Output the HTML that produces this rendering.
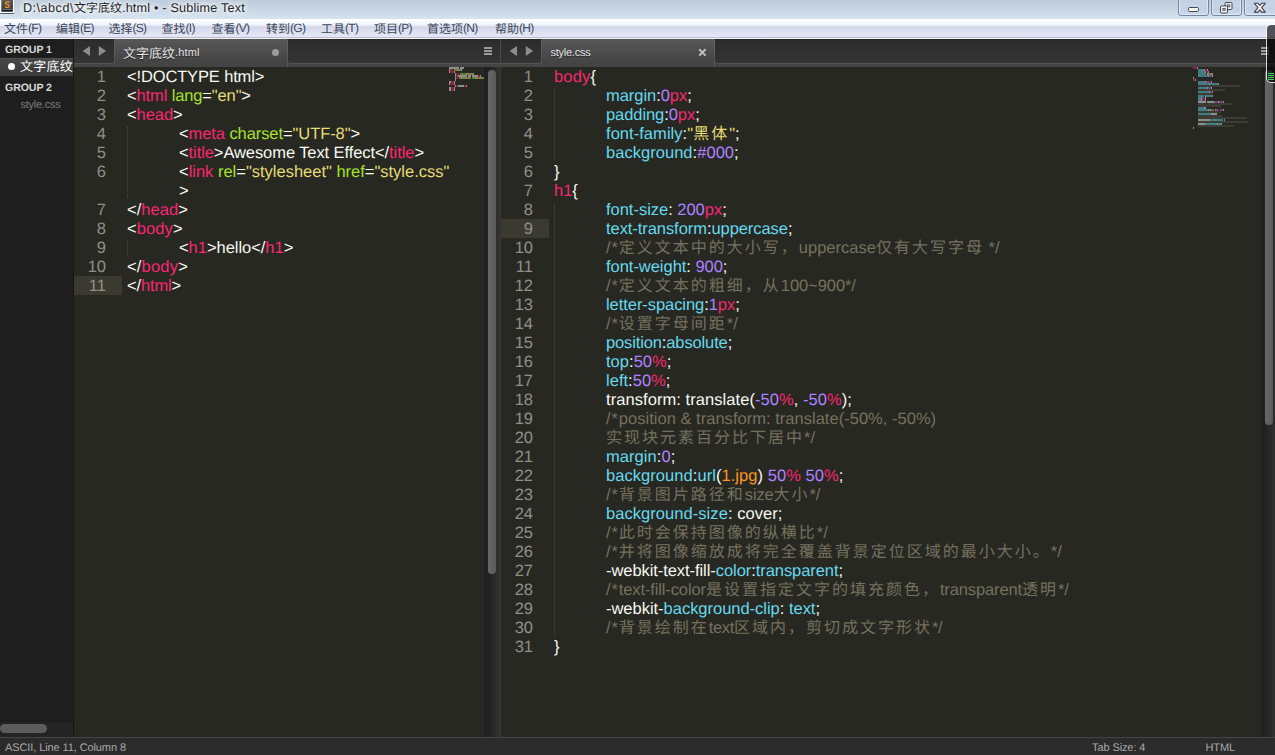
<!DOCTYPE html>
<html lang="en">
<head>
<meta charset="UTF-8">
<title>Sublime Text</title>
<style>
*{box-sizing:border-box;margin:0;padding:0}
html,body{width:1275px;height:755px;overflow:hidden;background:#272822}
body{text-rendering:geometricPrecision;position:relative;font-family:"Liberation Sans",sans-serif;font-size:12px;color:#f8f8f2}
.abs,#app div,#app i,#app svg.a{position:absolute}
span.cj{display:inline-block;vertical-align:top;overflow:visible;font-family:"Liberation Sans","Noto Sans CJK SC",sans-serif;letter-spacing:0;white-space:pre;font-weight:normal}
span.ck{font-size:16px;letter-spacing:2px;line-height:19px;height:19px}
/* title bar */
#title{left:0;top:0;width:1275px;height:19px;background:linear-gradient(#bdccdb 0,#c1cfde 25%,#d6e4f2 100%)}
#title .tx{left:23px;top:1px;height:19px;line-height:15px;padding-top:0;font-size:12.6px;color:#1b1f26;white-space:pre;text-shadow:0 0 5px #fff,0 0 5px #fff,0 0 8px #fff}
.wb{top:-3px;height:19px;border:1px solid #7585a3;border-radius:0 0 3px 3px;background:linear-gradient(#c0cfe1,#c5d4e6 50%,#bfd0e4 51%,#cad8ea);box-shadow:inset 0 0 0 1px rgba(255,255,255,.45)}
/* menu bar */
#menu{left:0;top:19px;width:1275px;height:20px;background:linear-gradient(#fff 0,#fdfdff 10%,#e9edf7 35%,#d4d7eb 35.1%,#e3e7f6 88%,#b9bdce 88.1%,#b9bdce 94%,#f2f2f2 94.1%)}
.ml{font-size:12px;letter-spacing:-.7px;position:relative;top:-1px}
.mi{top:3px;height:15px;line-height:15px;font-size:12px;color:#3a4759;white-space:pre}
/* sidebar */
#side{left:0;top:39px;width:74px;height:698px;background:#1e1e1e;border-right:1px solid #161616}
.grp{left:5px;font-weight:bold;font-size:10.6px;color:#d9d9d9;white-space:pre;height:14px;line-height:14px;letter-spacing:-.1px}
#sel{left:0;top:19px;width:73px;height:18px;background:linear-gradient(#474747,#3a3a3a);border-top:1px solid #505050}
/* tab bars */
.tb{top:39px;height:28px;background:#444;border-top:0}
.tb .inset{top:0;height:24px;background:linear-gradient(#262626 0,#2d2d2d 8%,#303030 50%,#343434);box-shadow:0 1px 0 #545454}
.tb .tab{top:0;height:28px;background:linear-gradient(#575757,#444 85%);border-radius:3px 3px 0 0;box-shadow:inset 1px 0 0 rgba(255,255,255,.08),inset -1px 0 0 rgba(255,255,255,.1)}
.tb .tl{top:7px;height:15px;line-height:15px;font-size:12px;color:#e6e6e6;white-space:pre;text-shadow:0 1px 1px #222}
.ham i{left:0;width:8px;height:2px;background:#9c9c9c}
/* editor */
.ln{height:19px;line-height:19px;font-size:16.5px;color:#8f908a;text-align:right;white-space:pre}
.cl{height:19px;line-height:19px;font-size:16.5px;white-space:pre}
.cs{letter-spacing:.9px}
.hl{height:19px;background:#3b3a30}
.ig{width:1px;background:repeating-linear-gradient(#4a4b42 0,#4a4b42 1px,transparent 1px,transparent 2px)}
.w{color:#f8f8f2}.p{color:#f92672}.g{color:#a6e22e}.y{color:#e6db74}.b{color:#66d9ef}.u{color:#ae81ff}.c{color:#75715e}.o{color:#fd971f}
.mm i{height:1.6px;opacity:.62}
.sbt{background:#232323}
.sbh{background:linear-gradient(90deg,#686868,#5a5a5a);border-radius:4px}
/* status */
#status{left:0;top:737px;width:1275px;height:18px;background:#2b2b2b;border-top:1px solid #454545}
#status div{top:4px;height:13px;line-height:13px;font-size:11px;letter-spacing:-.1px;color:#a9a9a9;white-space:pre}
</style>
</head>
<body>
<div id="app">

<!-- ======== title bar ======== -->
<div id="title">
  <svg class="a" style="left:0;top:0" width="16" height="16" viewBox="0 0 16 16">
    <defs><linearGradient id="icg" x1="0" y1="0" x2="0" y2="1"><stop offset="0" stop-color="#636363"/><stop offset="1" stop-color="#3a3a3a"/></linearGradient></defs>
    <rect x="0.2" y="12.8" width="14" height="1.3" rx=".6" fill="#3a4150" opacity=".8"/>
    <rect x="-1" y="-3" width="15" height="16" rx="1" fill="#fff"/>
    <rect x="1.3" y="-3" width="11.7" height="14.6" rx="1" fill="url(#icg)"/>
    <rect x="1.3" y="9.2" width="11.7" height=".7" fill="#808080"/>
    <rect x="1.3" y="9.9" width="11.7" height="1.7" rx=".6" fill="#141414"/>
    <text transform="translate(7.15 8.05) scale(.8 1)" text-anchor="middle" font-family="Liberation Sans" font-weight="bold" font-size="9.8" fill="#f8951d">S</text>
  </svg>
  <div class="tx"><span style="letter-spacing:.5px">D:\abcd\</span><span class="cj" style="width:48px;height:15px;line-height:15px;font-size:12px">文字底纹</span><span style="letter-spacing:.22px">.html • - Sublime Text</span></div>
  <div class="wb" style="left:1178px;width:31px"></div>
  <div class="wb" style="left:1211px;width:31px"></div>
  <div class="wb" style="left:1244px;width:34px"></div>
  <svg class="a" style="left:1178px;top:0" width="97" height="16" viewBox="0 0 97 16">
    <rect x="10.5" y="7.5" width="10" height="4" rx="1.2" fill="#f4f4f4" stroke="#46464f" stroke-width="1"/>
    <g fill="#f4f4f4" stroke="#46464f" stroke-width="1">
      <rect x="47" y="2.5" width="7" height="7" rx="1"/>
      <rect x="49.2" y="4.8" width="2.6" height="2" fill="#c9d6e6" stroke-width=".8"/>
      <rect x="42.5" y="6" width="7" height="7" rx="1"/>
      <rect x="44.8" y="8.4" width="2.4" height="2.2" fill="#c9d6e6" stroke-width=".8"/>
    </g>
    <path d="M76.3 3.3h3.7l1.8 2.2 1.8-2.2h3.7l-3.7 4.4 3.7 4.4h-3.7l-1.8-2.2-1.8 2.2h-3.7l3.7-4.4z" fill="#f5f5f5" stroke="#41414a" stroke-width="1.1" stroke-linejoin="round"/>
  </svg>
</div>

<!-- ======== menu bar ======== -->
<div id="menu"><div class="mi" style="left:4px"><span class="cj" style="width:24px;height:15px;line-height:15px;font-size:12px">文件</span><span class="ml">(F)</span></div><div class="mi" style="left:56px"><span class="cj" style="width:24px;height:15px;line-height:15px;font-size:12px">编辑</span><span class="ml">(E)</span></div><div class="mi" style="left:108.5px"><span class="cj" style="width:24px;height:15px;line-height:15px;font-size:12px">选择</span><span class="ml">(S)</span></div><div class="mi" style="left:161.5px"><span class="cj" style="width:24px;height:15px;line-height:15px;font-size:12px">查找</span><span class="ml">(I)</span></div><div class="mi" style="left:211.5px"><span class="cj" style="width:24px;height:15px;line-height:15px;font-size:12px">查看</span><span class="ml">(V)</span></div><div class="mi" style="left:266px"><span class="cj" style="width:24px;height:15px;line-height:15px;font-size:12px">转到</span><span class="ml">(G)</span></div><div class="mi" style="left:321px"><span class="cj" style="width:24px;height:15px;line-height:15px;font-size:12px">工具</span><span class="ml">(T)</span></div><div class="mi" style="left:374px"><span class="cj" style="width:24px;height:15px;line-height:15px;font-size:12px">项目</span><span class="ml">(P)</span></div><div class="mi" style="left:427px"><span class="cj" style="width:36px;height:15px;line-height:15px;font-size:12px">首选项</span><span class="ml">(N)</span></div><div class="mi" style="left:495px"><span class="cj" style="width:24px;height:15px;line-height:15px;font-size:12px">帮助</span><span class="ml">(H)</span></div></div>

<!-- ======== sidebar ======== -->
<div id="side">
  <div class="grp" style="top:4px">GROUP 1</div>
  <div id="sel"></div>
  <div style="left:8px;top:24px;width:7px;height:7px;border-radius:50%;background:#fff"></div>
  <div style="left:20px;top:20px;height:16px;line-height:16px;width:53px;overflow:hidden;color:#fff;white-space:pre"><span class="cj" style="width:53px;height:16px;line-height:16px;font-size:13px;letter-spacing:.25px">文字底纹</span></div>
  <div class="grp" style="top:42px">GROUP 2</div>
  <div style="left:20.5px;top:59px;height:14px;line-height:14px;font-size:11px;color:#7c7c7c;letter-spacing:-.25px;white-space:pre">style.css</div>
  <div style="left:0;top:683px;width:73px;height:15px;background:#242424"></div>
  <div style="left:0;top:685px;width:47px;height:8.5px;border-radius:4.5px;background:#5c5c5c"></div>
</div>

<!-- ======== left pane ======== -->
<div class="tb" style="left:74px;width:426px">
  <div class="inset" style="left:0;width:40px;border-radius:0 0 3px 0"></div>
  <div class="tab" style="left:40px;width:174px"></div>
  <div class="inset" style="left:214px;width:212px;border-radius:0 0 0 3px"></div>
  <svg class="a" style="left:8px;top:6px" width="26" height="12" viewBox="0 0 26 12"><path d="M.6 6l7.4-4.9v9.8zM24.2 6l-7.4-4.9v9.8z" fill="#8c8c8c"/></svg>
  <div class="tl" style="left:49px"><span class="cj" style="width:52px;height:15px;line-height:15px;font-size:13px">文字底纹</span><span style="font-size:11px;letter-spacing:.15px;position:relative;top:-1px">.html</span></div>
  <div style="left:198px;top:9.5px;width:7px;height:7px;border-radius:50%;background:#9b9b9b"></div>
  <div class="ham" style="left:410px;top:8px;width:8px;height:8px"><i style="top:0"></i><i style="top:3px"></i><i style="top:6px"></i></div>
</div>
<div class="sbt" style="left:484px;top:67px;width:17px;height:670px;background:linear-gradient(90deg,#1e1e1e,#232323 35%,#353535)"></div>
<div class="sbh" style="left:488px;top:70px;width:8px;height:504px"></div>
<div style="left:500px;top:39px;width:1px;height:28px;background:#4b4b4b"></div>

<!-- ======== right pane ======== -->
<div class="tb" style="left:501px;width:774px">
  <div class="inset" style="left:0;width:40px;border-radius:0 0 3px 0"></div>
  <div class="tab" style="left:40px;width:174px"></div>
  <div class="inset" style="left:214px;width:560px;border-radius:0 0 0 3px"></div>
  <svg class="a" style="left:8px;top:6px" width="26" height="12" viewBox="0 0 26 12"><path d="M.6 6l7.4-4.9v9.8zM24.2 6l-7.4-4.9v9.8z" fill="#8c8c8c"/></svg>
  <div class="tl" style="left:49.5px;font-size:11px;letter-spacing:-.25px">style.css</div>
  <svg class="a" style="left:197px;top:9px" width="9" height="9" viewBox="0 0 9 9"><path d="M1.2 1.2l6.4 6.4M7.6 1.2l-6.4 6.4" stroke="#c0c0c0" stroke-width="2"/></svg>
  <div class="ham" style="left:760px;top:8px;width:8px;height:8px"><i style="top:0"></i><i style="top:3px"></i><i style="top:6px"></i></div>
</div>
<div class="sbt" style="left:1261px;top:67px;width:14px;height:670px;background:linear-gradient(90deg,#1e1e1e,#232323 35%,#303030)"></div>
<div class="sbh" style="left:1265px;top:70px;width:8.3px;height:355px"></div>

<!-- ======== editor contents ======== -->
<div class="ig" style="left:127px;top:127px;height:72px"></div><div class="ig" style="left:127px;top:241px;height:15px"></div><div class="ig" style="left:554px;top:89px;height:72px"></div><div class="ig" style="left:554px;top:203px;height:433px"></div>
<div class="ln" style="left:66px;top:68px;width:40px">1</div>
<div class="cl" id="L0" style="left:127.0px;top:68px;letter-spacing:-0.142px"><span class="w">&lt;!DOCTYPE html&gt;</span></div>
<div class="ln" style="left:66px;top:87px;width:40px">2</div>
<div class="cl" id="L1" style="left:127.0px;top:87px;letter-spacing:-0.132px"><span class="w">&lt;</span><span class="p">html</span><span class="w"> </span><span class="g">lang</span><span class="w">=</span><span class="y">"en"</span><span class="w">&gt;</span></div>
<div class="ln" style="left:66px;top:106px;width:40px">3</div>
<div class="cl" id="L2" style="left:127.0px;top:106px;letter-spacing:-0.058px"><span class="w">&lt;</span><span class="p">head</span><span class="w">&gt;</span></div>
<div class="ln" style="left:66px;top:125px;width:40px">4</div>
<div class="cl" id="L3" style="left:179.0px;top:125px;letter-spacing:-0.083px"><span class="w">&lt;</span><span class="p">meta</span><span class="w"> </span><span class="g">charset</span><span class="w">=</span><span class="y">"UTF-8"</span><span class="w">&gt;</span></div>
<div class="ln" style="left:66px;top:144px;width:40px">5</div>
<div class="cl" id="L4" style="left:179.0px;top:144px;letter-spacing:-0.081px"><span class="w">&lt;</span><span class="p">title</span><span class="w">&gt;Awesome Text Effect&lt;/</span><span class="p">title</span><span class="w">&gt;</span></div>
<div class="ln" style="left:66px;top:163px;width:40px">6</div>
<div class="cl" id="L5" style="left:179.0px;top:163px;letter-spacing:-0.009px"><span class="w">&lt;</span><span class="p">link</span><span class="w"> </span><span class="g">rel</span><span class="w">=</span><span class="y">"stylesheet"</span><span class="w"> </span><span class="g">href</span><span class="w">=</span><span class="y">"style.css"</span></div>
<div class="cl" id="L6" style="left:179.0px;top:182px;letter-spacing:0.000px"><span class="w">&gt;</span></div>
<div class="ln" style="left:66px;top:201px;width:40px">7</div>
<div class="cl" id="L7" style="left:127.0px;top:201px;letter-spacing:0.051px"><span class="w">&lt;/</span><span class="p">head</span><span class="w">&gt;</span></div>
<div class="ln" style="left:66px;top:220px;width:40px">8</div>
<div class="cl" id="L8" style="left:127.0px;top:220px;letter-spacing:0.098px"><span class="w">&lt;</span><span class="p">body</span><span class="w">&gt;</span></div>
<div class="ln" style="left:66px;top:239px;width:40px">9</div>
<div class="cl" id="L9" style="left:179.0px;top:239px;letter-spacing:-0.033px"><span class="w">&lt;</span><span class="p">h1</span><span class="w">&gt;hello&lt;/</span><span class="p">h1</span><span class="w">&gt;</span></div>
<div class="ln" style="left:66px;top:258px;width:40px">10</div>
<div class="cl" id="L10" style="left:127.0px;top:258px;letter-spacing:0.185px"><span class="w">&lt;/</span><span class="p">body</span><span class="w">&gt;</span></div>
<div class="hl" style="left:74px;top:276px;width:48px"></div>
<div class="ln" style="left:66px;top:277px;width:40px">11</div>
<div class="cl" id="L11" style="left:127.0px;top:277px;letter-spacing:-0.142px"><span class="w">&lt;/</span><span class="p">html</span><span class="w">&gt;</span></div>
<div class="ln" style="left:493px;top:68px;width:40px">1</div>
<div class="cl" id="R0" style="left:554.0px;top:68px;letter-spacing:0.161px"><span class="p">body</span><span class="w">{</span></div>
<div class="ln" style="left:493px;top:87px;width:40px">2</div>
<div class="cl" id="R1" style="left:606.0px;top:87px;letter-spacing:-0.050px"><span class="b">margin</span><span class="w">:</span><span class="u">0</span><span class="p">px</span><span class="w">;</span></div>
<div class="ln" style="left:493px;top:106px;width:40px">3</div>
<div class="cl" id="R2" style="left:606.0px;top:106px;letter-spacing:-0.071px"><span class="b">padding</span><span class="w">:</span><span class="u">0</span><span class="p">px</span><span class="w">;</span></div>
<div class="ln" style="left:493px;top:125px;width:40px">4</div>
<div class="cl" id="R3" style="left:606.0px;top:125px;letter-spacing:0.045px"><span class="b">font-family</span><span class="w">:</span><span class="y">"<span class="cj ck" style="width:36px">黑体</span>"</span><span class="w">;</span></div>
<div class="ln" style="left:493px;top:144px;width:40px">5</div>
<div class="cl" id="R4" style="left:606.0px;top:144px;letter-spacing:0.035px"><span class="b">background</span><span class="w">:</span><span class="u">#000</span><span class="w">;</span></div>
<div class="ln" style="left:493px;top:163px;width:40px">6</div>
<div class="cl" id="R5" style="left:554.0px;top:163px;letter-spacing:0.000px"><span class="w">}</span></div>
<div class="ln" style="left:493px;top:182px;width:40px">7</div>
<div class="cl" id="R6" style="left:554.0px;top:182px;letter-spacing:0.000px"><span class="p">h1</span><span class="w">{</span></div>
<div class="ln" style="left:493px;top:201px;width:40px">8</div>
<div class="cl" id="R7" style="left:606.0px;top:201px;letter-spacing:-0.023px"><span class="b">font-size</span><span class="w">: </span><span class="u">200</span><span class="p">px</span><span class="w">;</span></div>
<div class="hl" style="left:501px;top:219px;width:48px"></div>
<div class="ln" style="left:493px;top:220px;width:40px">9</div>
<div class="cl" id="R8" style="left:606.0px;top:220px;letter-spacing:-0.065px"><span class="b">text-transform</span><span class="w">:</span><span class="b">uppercase</span><span class="w">;</span></div>
<div class="ln" style="left:493px;top:239px;width:40px">10</div>
<div class="cl" id="R9" style="left:606.0px;top:239px;letter-spacing:0.009px"><span class="c"><span class="cs">/*</span><span class="cj ck" style="width:180px">定义文本中的大小写，</span>uppercase<span class="cj ck" style="width:108px">仅有大写字母</span> */</span></div>
<div class="ln" style="left:493px;top:258px;width:40px">11</div>
<div class="cl" id="R10" style="left:606.0px;top:258px;letter-spacing:-0.036px"><span class="b">font-weight</span><span class="w">: </span><span class="u">900</span><span class="w">;</span></div>
<div class="ln" style="left:493px;top:277px;width:40px">12</div>
<div class="cl" id="R11" style="left:606.0px;top:277px;letter-spacing:-0.074px"><span class="c"><span class="cs">/*</span><span class="cj ck" style="width:162px">定义文本的粗细，从</span>100~900*/</span></div>
<div class="ln" style="left:493px;top:296px;width:40px">13</div>
<div class="cl" id="R12" style="left:606.0px;top:296px;letter-spacing:-0.062px"><span class="b">letter-spacing</span><span class="w">:</span><span class="u">1</span><span class="p">px</span><span class="w">;</span></div>
<div class="ln" style="left:493px;top:315px;width:40px">14</div>
<div class="cl" id="R13" style="left:606.0px;top:315px;letter-spacing:0.000px"><span class="c"><span class="cs">/*</span><span class="cj ck" style="width:108px">设置字母间距</span>*/</span></div>
<div class="ln" style="left:493px;top:334px;width:40px">15</div>
<div class="cl" id="R14" style="left:606.0px;top:334px;letter-spacing:-0.131px"><span class="b">position</span><span class="w">:</span><span class="b">absolute</span><span class="w">;</span></div>
<div class="ln" style="left:493px;top:353px;width:40px">16</div>
<div class="cl" id="R15" style="left:606.0px;top:353px;letter-spacing:0.030px"><span class="b">top</span><span class="w">:</span><span class="u">50</span><span class="p">%</span><span class="w">;</span></div>
<div class="ln" style="left:493px;top:372px;width:40px">17</div>
<div class="cl" id="R16" style="left:606.0px;top:372px;letter-spacing:0.018px"><span class="b">left</span><span class="w">:</span><span class="u">50</span><span class="p">%</span><span class="w">;</span></div>
<div class="ln" style="left:493px;top:391px;width:40px">18</div>
<div class="cl" id="R17" style="left:606.0px;top:391px;letter-spacing:0.062px"><span class="w">transform: translate(</span><span class="u">-50</span><span class="p">%</span><span class="w">, </span><span class="u">-50</span><span class="p">%</span><span class="w">);</span></div>
<div class="ln" style="left:493px;top:410px;width:40px">19</div>
<div class="cl" id="R18" style="left:606.0px;top:410px;letter-spacing:0.022px"><span class="c"><span class="cs">/*</span>position &amp; transform: translate(-50%, -50%)</span></div>
<div class="ln" style="left:493px;top:429px;width:40px">20</div>
<div class="cl" id="R19" style="left:606.0px;top:429px;letter-spacing:0.000px"><span class="c"><span class="cj ck" style="width:198px">实现块元素百分比下居中</span>*/</span></div>
<div class="ln" style="left:493px;top:448px;width:40px">21</div>
<div class="cl" id="R20" style="left:606.0px;top:448px;letter-spacing:0.065px"><span class="b">margin</span><span class="w">:</span><span class="u">0</span><span class="w">;</span></div>
<div class="ln" style="left:493px;top:467px;width:40px">22</div>
<div class="cl" id="R21" style="left:606.0px;top:467px;letter-spacing:0.053px"><span class="b">background</span><span class="w">:</span><span class="b">url</span><span class="w">(</span><span class="o">1.jpg</span><span class="w">) </span><span class="u">50</span><span class="p">%</span><span class="w"> </span><span class="u">50</span><span class="p">%</span><span class="w">;</span></div>
<div class="ln" style="left:493px;top:486px;width:40px">23</div>
<div class="cl" id="R22" style="left:606.0px;top:486px;letter-spacing:-0.146px"><span class="c"><span class="cs">/*</span><span class="cj ck" style="width:126px">背景图片路径和</span>size<span class="cj ck" style="width:36px">大小</span>*/</span></div>
<div class="ln" style="left:493px;top:505px;width:40px">24</div>
<div class="cl" id="R23" style="left:606.0px;top:505px;letter-spacing:0.053px"><span class="b">background-size</span><span class="w">: cover;</span></div>
<div class="ln" style="left:493px;top:524px;width:40px">25</div>
<div class="cl" id="R24" style="left:606.0px;top:524px;letter-spacing:0.000px"><span class="c"><span class="cs">/*</span><span class="cj ck" style="width:198px">此时会保持图像的纵横比</span>*/</span></div>
<div class="ln" style="left:493px;top:543px;width:40px">26</div>
<div class="cl" id="R25" style="left:606.0px;top:543px;letter-spacing:0.000px"><span class="c"><span class="cs">/*</span><span class="cj ck" style="width:432px">并将图像缩放成将完全覆盖背景定位区域的最小大小。</span>*/</span></div>
<div class="ln" style="left:493px;top:562px;width:40px">27</div>
<div class="cl" id="R26" style="left:606.0px;top:562px;letter-spacing:-0.066px"><span class="w">-webkit-text-fill-</span><span class="b">color</span><span class="w">:</span><span class="b">transparent</span><span class="w">;</span></div>
<div class="ln" style="left:493px;top:581px;width:40px">28</div>
<div class="cl" id="R27" style="left:606.0px;top:581px;letter-spacing:-0.124px"><span class="c"><span class="cs">/*</span>text-fill-color<span class="cj ck" style="width:234px">是设置指定文字的填充颜色，</span>transparent<span class="cj ck" style="width:36px">透明</span>*/</span></div>
<div class="ln" style="left:493px;top:600px;width:40px">29</div>
<div class="cl" id="R28" style="left:606.0px;top:600px;letter-spacing:-0.021px"><span class="w">-webkit-</span><span class="b">background-clip</span><span class="w">: </span><span class="b">text</span><span class="w">;</span></div>
<div class="ln" style="left:493px;top:619px;width:40px">30</div>
<div class="cl" id="R29" style="left:606.0px;top:619px;letter-spacing:-0.350px"><span class="c"><span class="cs">/*</span><span class="cj ck" style="width:90px">背景绘制在</span>text<span class="cj ck" style="width:198px">区域内，剪切成文字形状</span>*/</span></div>
<div class="ln" style="left:493px;top:638px;width:40px">31</div>
<div class="cl" id="R30" style="left:554.0px;top:638px;letter-spacing:0.000px"><span class="w">}</span></div>
<div class="mm"><i style="left:449.0px;top:67px;width:10.1px;background:#cfcfc8"></i><i style="left:459.5px;top:67px;width:4.4px;background:#cfcfc8"></i><i style="left:449.0px;top:69px;width:1.0px;background:#cfcfc8"></i><i style="left:450.0px;top:69px;width:3.3px;background:#c81f5c"></i><i style="left:453.9px;top:69px;width:3.3px;background:#86b626"></i><i style="left:457.2px;top:69px;width:1.0px;background:#cfcfc8"></i><i style="left:458.2px;top:69px;width:3.2px;background:#b8af5d"></i><i style="left:461.4px;top:69px;width:1.0px;background:#cfcfc8"></i><i style="left:449.0px;top:71px;width:1.0px;background:#cfcfc8"></i><i style="left:450.0px;top:71px;width:3.9px;background:#c81f5c"></i><i style="left:454.0px;top:71px;width:1.0px;background:#cfcfc8"></i><i style="left:454.6px;top:73px;width:1.0px;background:#cfcfc8"></i><i style="left:455.6px;top:73px;width:3.9px;background:#c81f5c"></i><i style="left:460.0px;top:73px;width:5.8px;background:#86b626"></i><i style="left:465.8px;top:73px;width:1.0px;background:#cfcfc8"></i><i style="left:466.9px;top:73px;width:6.3px;background:#b8af5d"></i><i style="left:473.1px;top:73px;width:1.0px;background:#cfcfc8"></i><i style="left:454.6px;top:75px;width:1.0px;background:#cfcfc8"></i><i style="left:455.6px;top:75px;width:2.7px;background:#c81f5c"></i><i style="left:458.4px;top:75px;width:8.8px;background:#cfcfc8"></i><i style="left:467.7px;top:75px;width:3.4px;background:#cfcfc8"></i><i style="left:471.6px;top:75px;width:6.0px;background:#cfcfc8"></i><i style="left:477.6px;top:75px;width:2.7px;background:#c81f5c"></i><i style="left:480.4px;top:75px;width:1.0px;background:#cfcfc8"></i><i style="left:454.6px;top:77px;width:1.0px;background:#cfcfc8"></i><i style="left:455.6px;top:77px;width:2.6px;background:#c81f5c"></i><i style="left:458.8px;top:77px;width:2.0px;background:#86b626"></i><i style="left:460.7px;top:77px;width:1.0px;background:#cfcfc8"></i><i style="left:461.8px;top:77px;width:9.2px;background:#b8af5d"></i><i style="left:471.5px;top:77px;width:3.0px;background:#86b626"></i><i style="left:474.5px;top:77px;width:1.0px;background:#cfcfc8"></i><i style="left:475.5px;top:77px;width:8.0px;background:#b8af5d"></i><i style="left:454.6px;top:79px;width:1.0px;background:#cfcfc8"></i><i style="left:449.0px;top:81px;width:1.5px;background:#cfcfc8"></i><i style="left:450.5px;top:81px;width:3.9px;background:#c81f5c"></i><i style="left:454.4px;top:81px;width:1.0px;background:#cfcfc8"></i><i style="left:449.0px;top:83px;width:1.0px;background:#cfcfc8"></i><i style="left:450.0px;top:83px;width:3.8px;background:#c81f5c"></i><i style="left:453.9px;top:83px;width:1.0px;background:#cfcfc8"></i><i style="left:454.6px;top:85px;width:1.0px;background:#cfcfc8"></i><i style="left:455.6px;top:85px;width:2.0px;background:#c81f5c"></i><i style="left:457.6px;top:85px;width:6.3px;background:#cfcfc8"></i><i style="left:463.9px;top:85px;width:2.0px;background:#c81f5c"></i><i style="left:465.8px;top:85px;width:1.0px;background:#cfcfc8"></i><i style="left:449.0px;top:87px;width:1.5px;background:#cfcfc8"></i><i style="left:450.5px;top:87px;width:3.8px;background:#c81f5c"></i><i style="left:454.3px;top:87px;width:1.0px;background:#cfcfc8"></i><i style="left:449.0px;top:89px;width:1.5px;background:#cfcfc8"></i><i style="left:450.5px;top:89px;width:3.3px;background:#c81f5c"></i><i style="left:453.9px;top:89px;width:1.0px;background:#cfcfc8"></i><i style="left:1192.8px;top:67px;width:3.8px;background:#c81f5c"></i><i style="left:1196.6px;top:67px;width:0.8px;background:#cfcfc8"></i><i style="left:1198.4px;top:69px;width:5.4px;background:#52aebf"></i><i style="left:1203.8px;top:69px;width:0.8px;background:#cfcfc8"></i><i style="left:1204.3px;top:69px;width:1.0px;background:#8b67cc"></i><i style="left:1205.3px;top:69px;width:1.9px;background:#c81f5c"></i><i style="left:1207.1px;top:69px;width:0.8px;background:#cfcfc8"></i><i style="left:1198.4px;top:71px;width:6.3px;background:#52aebf"></i><i style="left:1204.7px;top:71px;width:0.8px;background:#cfcfc8"></i><i style="left:1205.2px;top:71px;width:1.0px;background:#8b67cc"></i><i style="left:1206.2px;top:71px;width:1.9px;background:#c81f5c"></i><i style="left:1208.0px;top:71px;width:0.8px;background:#cfcfc8"></i><i style="left:1198.4px;top:73px;width:8.1px;background:#52aebf"></i><i style="left:1206.5px;top:73px;width:0.8px;background:#cfcfc8"></i><i style="left:1207.0px;top:73px;width:5.1px;background:#b8af5d"></i><i style="left:1212.1px;top:73px;width:0.8px;background:#cfcfc8"></i><i style="left:1198.4px;top:75px;width:9.2px;background:#52aebf"></i><i style="left:1207.6px;top:75px;width:0.8px;background:#cfcfc8"></i><i style="left:1208.1px;top:75px;width:3.9px;background:#8b67cc"></i><i style="left:1212.0px;top:75px;width:0.8px;background:#cfcfc8"></i><i style="left:1192.8px;top:77px;width:0.8px;background:#cfcfc8"></i><i style="left:1192.8px;top:79px;width:2.0px;background:#c81f5c"></i><i style="left:1194.8px;top:79px;width:0.8px;background:#cfcfc8"></i><i style="left:1198.4px;top:81px;width:6.7px;background:#52aebf"></i><i style="left:1205.1px;top:81px;width:0.8px;background:#cfcfc8"></i><i style="left:1206.1px;top:81px;width:2.9px;background:#8b67cc"></i><i style="left:1209.0px;top:81px;width:1.9px;background:#c81f5c"></i><i style="left:1210.9px;top:81px;width:0.8px;background:#cfcfc8"></i><i style="left:1198.4px;top:83px;width:10.9px;background:#52aebf"></i><i style="left:1209.3px;top:83px;width:0.8px;background:#cfcfc8"></i><i style="left:1209.8px;top:83px;width:8.2px;background:#52aebf"></i><i style="left:1218.0px;top:83px;width:0.8px;background:#cfcfc8"></i><i style="left:1198.4px;top:85px;width:40.2px;background:#4d4a40"></i><i style="left:1239.1px;top:85px;width:1.2px;background:#4d4a40"></i><i style="left:1198.4px;top:87px;width:8.6px;background:#52aebf"></i><i style="left:1207.0px;top:87px;width:0.8px;background:#cfcfc8"></i><i style="left:1208.0px;top:87px;width:2.9px;background:#8b67cc"></i><i style="left:1211.0px;top:87px;width:0.8px;background:#cfcfc8"></i><i style="left:1198.4px;top:89px;width:26.6px;background:#4d4a40"></i><i style="left:1198.4px;top:91px;width:10.6px;background:#52aebf"></i><i style="left:1209.0px;top:91px;width:0.8px;background:#cfcfc8"></i><i style="left:1209.5px;top:91px;width:1.0px;background:#8b67cc"></i><i style="left:1210.5px;top:91px;width:1.9px;background:#c81f5c"></i><i style="left:1212.3px;top:91px;width:0.8px;background:#cfcfc8"></i><i style="left:1198.4px;top:93px;width:13.9px;background:#4d4a40"></i><i style="left:1198.4px;top:95px;width:6.1px;background:#52aebf"></i><i style="left:1204.5px;top:95px;width:0.8px;background:#cfcfc8"></i><i style="left:1205.0px;top:95px;width:6.7px;background:#52aebf"></i><i style="left:1211.7px;top:95px;width:0.8px;background:#cfcfc8"></i><i style="left:1198.4px;top:97px;width:2.5px;background:#52aebf"></i><i style="left:1200.9px;top:97px;width:0.8px;background:#cfcfc8"></i><i style="left:1201.3px;top:97px;width:2.0px;background:#8b67cc"></i><i style="left:1203.3px;top:97px;width:1.6px;background:#c81f5c"></i><i style="left:1204.9px;top:97px;width:0.8px;background:#cfcfc8"></i><i style="left:1198.4px;top:99px;width:2.4px;background:#52aebf"></i><i style="left:1200.8px;top:99px;width:0.8px;background:#cfcfc8"></i><i style="left:1201.2px;top:99px;width:2.0px;background:#8b67cc"></i><i style="left:1203.2px;top:99px;width:1.6px;background:#c81f5c"></i><i style="left:1204.8px;top:99px;width:0.8px;background:#cfcfc8"></i><i style="left:1198.4px;top:101px;width:7.9px;background:#cfcfc8"></i><i style="left:1206.8px;top:101px;width:7.4px;background:#cfcfc8"></i><i style="left:1214.2px;top:101px;width:2.6px;background:#8b67cc"></i><i style="left:1216.7px;top:101px;width:1.6px;background:#c81f5c"></i><i style="left:1218.3px;top:101px;width:0.8px;background:#cfcfc8"></i><i style="left:1219.3px;top:101px;width:2.6px;background:#8b67cc"></i><i style="left:1221.9px;top:101px;width:1.6px;background:#c81f5c"></i><i style="left:1223.4px;top:101px;width:1.1px;background:#cfcfc8"></i><i style="left:1198.4px;top:103px;width:7.3px;background:#4d4a40"></i><i style="left:1206.2px;top:103px;width:1.2px;background:#4d4a40"></i><i style="left:1207.8px;top:103px;width:7.9px;background:#4d4a40"></i><i style="left:1216.3px;top:103px;width:12.0px;background:#4d4a40"></i><i style="left:1228.7px;top:103px;width:4.7px;background:#4d4a40"></i><i style="left:1198.4px;top:105px;width:22.4px;background:#4d4a40"></i><i style="left:1198.4px;top:107px;width:5.4px;background:#52aebf"></i><i style="left:1203.8px;top:107px;width:0.8px;background:#cfcfc8"></i><i style="left:1204.3px;top:107px;width:1.0px;background:#8b67cc"></i><i style="left:1205.3px;top:107px;width:0.8px;background:#cfcfc8"></i><i style="left:1198.4px;top:109px;width:9.2px;background:#52aebf"></i><i style="left:1207.6px;top:109px;width:0.8px;background:#cfcfc8"></i><i style="left:1208.1px;top:109px;width:2.0px;background:#52aebf"></i><i style="left:1210.1px;top:109px;width:0.8px;background:#cfcfc8"></i><i style="left:1210.7px;top:109px;width:3.8px;background:#ca7919"></i><i style="left:1214.5px;top:109px;width:0.8px;background:#cfcfc8"></i><i style="left:1215.6px;top:109px;width:2.0px;background:#8b67cc"></i><i style="left:1217.5px;top:109px;width:1.6px;background:#c81f5c"></i><i style="left:1219.6px;top:109px;width:2.0px;background:#8b67cc"></i><i style="left:1221.6px;top:109px;width:1.6px;background:#c81f5c"></i><i style="left:1223.1px;top:109px;width:0.8px;background:#cfcfc8"></i><i style="left:1198.4px;top:111px;width:22.8px;background:#4d4a40"></i><i style="left:1198.4px;top:113px;width:13.0px;background:#52aebf"></i><i style="left:1211.4px;top:113px;width:0.8px;background:#cfcfc8"></i><i style="left:1212.3px;top:113px;width:4.8px;background:#cfcfc8"></i><i style="left:1198.4px;top:115px;width:23.5px;background:#4d4a40"></i><i style="left:1198.4px;top:117px;width:48.6px;background:#4d4a40"></i><i style="left:1198.4px;top:119px;width:11.9px;background:#cfcfc8"></i><i style="left:1210.3px;top:119px;width:3.8px;background:#52aebf"></i><i style="left:1214.1px;top:119px;width:0.8px;background:#cfcfc8"></i><i style="left:1214.6px;top:119px;width:8.9px;background:#52aebf"></i><i style="left:1223.5px;top:119px;width:0.8px;background:#cfcfc8"></i><i style="left:1198.4px;top:121px;width:49.7px;background:#4d4a40"></i><i style="left:1198.4px;top:123px;width:6.2px;background:#cfcfc8"></i><i style="left:1204.6px;top:123px;width:12.5px;background:#52aebf"></i><i style="left:1217.0px;top:123px;width:0.8px;background:#cfcfc8"></i><i style="left:1218.0px;top:123px;width:2.8px;background:#52aebf"></i><i style="left:1220.9px;top:123px;width:0.8px;background:#cfcfc8"></i><i style="left:1198.4px;top:125px;width:36.0px;background:#4d4a40"></i><i style="left:1192.8px;top:127px;width:0.8px;background:#cfcfc8"></i></div>

<!-- ======== overlay pill at top-right ======== -->
<div style="left:1266px;top:24px;width:14px;height:59px;border:1px solid rgba(255,255,255,.8);border-radius:5px 0 0 5px;background:rgba(0,0,0,.63);background-clip:padding-box"></div>
<div style="left:1268px;top:73px;width:6px;height:8px;background:repeating-linear-gradient(#3edb5b 0,#3edb5b 1.2px,rgba(0,0,0,0) 1.2px,rgba(0,0,0,0) 2.1px)"></div>

<!-- ======== status bar ======== -->
<div id="status">
  <div style="left:5px">ASCII, Line 11, Column 8</div>
  <div style="left:1092px">Tab Size: 4</div>
  <div style="left:1205.5px">HTML</div>
</div>

</div>
</body>
</html>
